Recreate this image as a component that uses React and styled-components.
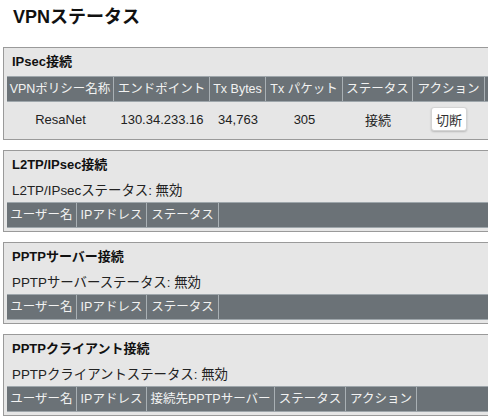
import React from "react";
import styled, { createGlobalStyle } from "styled-components";

const GlobalStyle = createGlobalStyle`
  body {
    margin: 0;
    background: #fff;
    overflow: hidden;
    font-family: "Liberation Sans", "Noto Sans CJK JP", sans-serif;
    color: #222;
  }
`;

const Page = styled.div`
  width: 488px;
  height: 418px;
  overflow: hidden;
  padding-left: 3px;
`;

const PageTitle = styled.h1`
  margin: 0;
  padding: 5px 0 0 10px;
  height: 47px;
  box-sizing: border-box;
  font-size: 18px;
  line-height: 24px;
  font-weight: bold;
  color: #111;
`;

const Panel = styled.section`
  width: 540px;
  box-sizing: border-box;
  margin-bottom: 10px;
  border: 1px solid #9a9a9a;
  background: #e6e6e6;
  padding: 0 3px 3px 3px;
`;

const PanelTitle = styled.h2`
  margin: 0;
  padding-left: 5px;
  font-size: 13px;
  line-height: 28px;
  font-weight: bold;
  color: #111;
`;

const StatusLine = styled.div`
  padding-left: 5px;
  font-size: 13.4px;
  line-height: 23px;
  color: #222;
`;

const HeadRow = styled.div`
  display: flex;
  height: 24px;
  background: #6b7277;
  border-top: 1px solid #9ea6ab;
  border-bottom: 1px solid #9ea6ab;
`;

const HeadCell = styled.div`
  flex: none;
  width: ${(p) => p.$w}px;
  box-sizing: border-box;
  border-right: 1px solid #a9b0b4;
  color: #f2f2f2;
  font-size: 12.5px;
  line-height: 24px;
  text-align: center;
  white-space: nowrap;
`;

const BodyRow = styled.div`
  display: flex;
  height: 34px;
  align-items: center;
`;

const BodyCell = styled.div`
  flex: none;
  width: ${(p) => p.$w}px;
  font-size: 13px;
  text-align: center;
  white-space: nowrap;
  color: #222;
`;

const Button = styled.button`
  font-family: inherit;
  font-size: 13px;
  color: #333;
  background: #fff;
  border: 1px solid #d4d4d4;
  border-radius: 3px;
  box-shadow: 0 1px 2px rgba(0, 0, 0, 0.2);
  padding: 0 4px;
  height: 24px;
  cursor: pointer;
`;

const ipsecCols = [107, 96, 56, 77, 70, 72];
const userCols = [70, 70, 72];
const clientCols = [70, 70, 128, 71, 71];

function Header({ cols, labels }) {
  return (
    <HeadRow>
      {labels.map((l, i) => (
        <HeadCell key={i} $w={cols[i]}>
          {l}
        </HeadCell>
      ))}
    </HeadRow>
  );
}

export default function App() {
  return (
    <>
      <GlobalStyle />
      <Page>
        <PageTitle>VPNステータス</PageTitle>

        <Panel>
          <PanelTitle>IPsec接続</PanelTitle>
          <Header
            cols={ipsecCols}
            labels={["VPNポリシー名称", "エンドポイント", "Tx Bytes", "Tx パケット", "ステータス", "アクション"]}
          />
          <BodyRow>
            <BodyCell $w={ipsecCols[0]}>ResaNet</BodyCell>
            <BodyCell $w={ipsecCols[1]}>130.34.233.16</BodyCell>
            <BodyCell $w={ipsecCols[2]}>34,763</BodyCell>
            <BodyCell $w={ipsecCols[3]}>305</BodyCell>
            <BodyCell $w={ipsecCols[4]}>接続</BodyCell>
            <BodyCell $w={ipsecCols[5]}>
              <Button>切断</Button>
            </BodyCell>
          </BodyRow>
        </Panel>

        <Panel>
          <PanelTitle>L2TP/IPsec接続</PanelTitle>
          <StatusLine>L2TP/IPsecステータス: 無効</StatusLine>
          <Header cols={userCols} labels={["ユーザー名", "IPアドレス", "ステータス"]} />
        </Panel>

        <Panel>
          <PanelTitle>PPTPサーバー接続</PanelTitle>
          <StatusLine>PPTPサーバーステータス: 無効</StatusLine>
          <Header cols={userCols} labels={["ユーザー名", "IPアドレス", "ステータス"]} />
        </Panel>

        <Panel>
          <PanelTitle>PPTPクライアント接続</PanelTitle>
          <StatusLine>PPTPクライアントステータス: 無効</StatusLine>
          <Header
            cols={clientCols}
            labels={["ユーザー名", "IPアドレス", "接続先PPTPサーバー", "ステータス", "アクション"]}
          />
        </Panel>
      </Page>
    </>
  );
}
